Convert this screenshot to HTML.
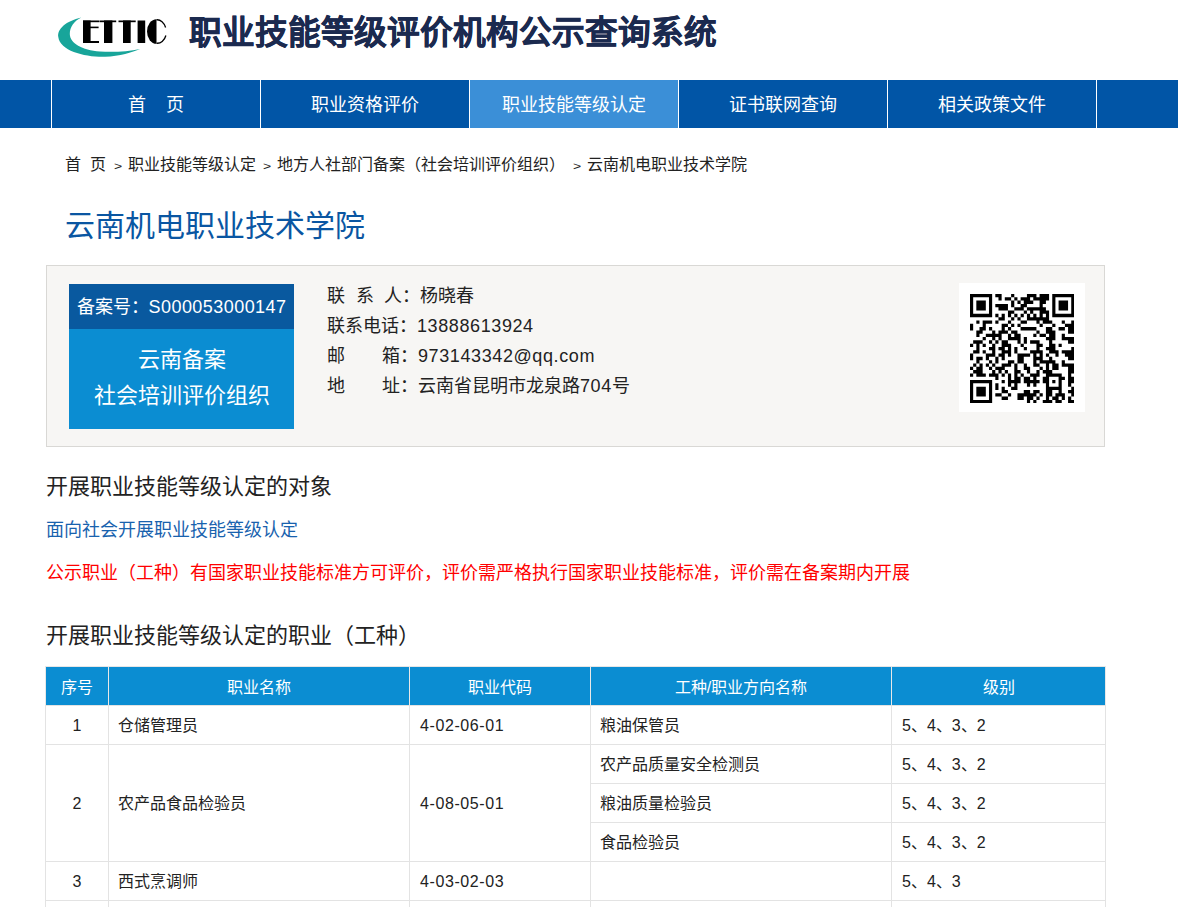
<!DOCTYPE html>
<html lang="zh-CN"><head><meta charset="utf-8">
<style>
*{margin:0;padding:0;box-sizing:border-box}
html,body{width:1178px;height:907px;overflow:hidden;background:#fff}
body{position:relative;font-family:"Liberation Sans",sans-serif;color:#222}
.a{position:absolute;white-space:nowrap}
#nav{position:absolute;left:0;top:80px;width:1178px;height:48px;background:#0155a6}
#nav .d{position:absolute;top:0;width:1px;height:48px;background:#fff}
#nav .c{position:absolute;top:0;height:48px;line-height:51px;font-size:18px;color:#fff;text-align:center}
#nav .on{background:#3b8fd7}
.crumb{font-size:16px;color:#222;top:154px;line-height:22px}
.crumb.gt{font-size:14px;top:155px;transform:scaleY(0.8);transform-origin:0 11px}
#info{position:absolute;left:46px;top:265px;width:1059px;height:182px;background:#f7f6f4;border:1px solid #d9d8d5}
#bluebox{position:absolute;left:69px;top:284px;width:225px;height:145px;background:#0b8dd2}
#bluetop{position:absolute;left:69px;top:284px;width:225px;height:45px;background:#09599f}
.inf{font-size:18px;color:#222;line-height:30px}
table{position:absolute;left:45px;top:666px;border-collapse:collapse;table-layout:fixed;width:1060px}
td,th{border:1px solid #e3e3e3;font-size:16px;height:39px;padding:2px 10px 0;font-weight:normal;color:#222;text-align:left}
th{background:#0b8dd2;color:#fff;text-align:center;height:39px;padding:0 10px 1px;border-color:#e6e6e6 #e8e8e8 #e3e3e3}
.n{letter-spacing:0.6px}
td.z{padding:0 10px 2px 9px}
td.y{padding:0 10px 2px 10px}
td.ctr{text-align:center}
</style></head><body>

<!-- logo -->
<svg class="a" style="left:0;top:0" width="180" height="70" viewBox="0 0 180 70">
  <path d="M81.3 17.5C66 21 57 29 58.3 37C60 51 85 57.3 105 56.8C120 56.3 132 52.5 140.2 49C128 51.5 115 52.3 100 51.6C82 50 70 43.5 69.8 34C69.8 27 74 21 81.3 17.5Z" fill="#18a59a"/>
  <g fill="#000">
    <rect x="83" y="20.5" width="7.6" height="22.5"/><rect x="83" y="20.5" width="16" height="1.7"/><rect x="90" y="26.6" width="8.6" height="1.6"/><rect x="83" y="41" width="16" height="2"/>
    <rect x="99.4" y="20.5" width="16.8" height="1.7"/><rect x="104" y="20.5" width="8.4" height="22.5"/>
    <rect x="118.5" y="20.5" width="17.2" height="1.7"/><rect x="123" y="20.5" width="7.7" height="22.5"/>
    <rect x="137.6" y="20.5" width="7.6" height="22.5"/>
    <path d="M156.5 19.2A9.5 12.3 0 0 0 156.5 43.8Z"/>
  </g>
  <path d="M156.5 19.8A9 11.8 0 0 1 165.6 27.5M156.5 43.2A9 11.8 0 0 0 165.9 35.5" fill="none" stroke="#000" stroke-width="1.3"/>
</svg>
<div class="a" id="title" style="left:188.5px;top:12.5px;font-size:32.65px;font-weight:900;color:#1b2a4f;line-height:40px;-webkit-text-stroke:0.5px #1b2a4f">职业技能等级评价机构公示查询系统</div>

<div id="nav">
  <div class="c" style="left:52px;width:208px">首&nbsp;&nbsp;&nbsp;&nbsp;页</div>
  <div class="c" style="left:261px;width:208px">职业资格评价</div>
  <div class="c on" style="left:470px;width:208px">职业技能等级认定</div>
  <div class="c" style="left:679px;width:208px">证书联网查询</div>
  <div class="c" style="left:888px;width:208px">相关政策文件</div>
  <div class="d" style="left:51px"></div><div class="d" style="left:260px"></div><div class="d" style="left:469px"></div><div class="d" style="left:678px"></div><div class="d" style="left:887px"></div><div class="d" style="left:1096px"></div>
</div>

<div class="a crumb" style="left:65px">首</div>
<div class="a crumb" style="left:90px">页</div>
<div class="a crumb gt" style="left:114px">&gt;</div>
<div class="a crumb" style="left:128px">职业技能等级认定</div>
<div class="a crumb gt" style="left:263px">&gt;</div>
<div class="a crumb" style="left:277px">地方人社部门备案（社会培训评价组织）</div>
<div class="a crumb gt" style="left:573px">&gt;</div>
<div class="a crumb" style="left:587px">云南机电职业技术学院</div>

<div class="a" style="left:64.5px;top:206px;font-size:30px;line-height:40px;color:#0a56a2">云南机电职业技术学院</div>

<div id="info"></div>
<div id="bluebox"></div>
<div id="bluetop"></div>
<div class="a" style="left:69px;top:292px;width:225px;text-align:center;font-size:18px;line-height:30px;color:#fff">备案号：<span style="letter-spacing:0.45px">S000053000147</span></div>
<div class="a" style="left:69px;top:342px;width:225px;text-align:center;font-size:22px;line-height:35.5px;color:#fff">云南备案<br>社会培训评价组织</div>

<div class="a inf" style="left:327px;top:280.5px">联</div>
<div class="a inf" style="left:356px;top:280.5px">系</div>
<div class="a inf" style="left:384px;top:280.5px">人</div>
<div class="a inf" style="left:402px;top:280.5px">：杨晓春</div>
<div class="a inf" style="left:327px;top:310.5px">联系电话：<span class="n">13888613924</span></div>
<div class="a inf" style="left:327px;top:340.5px">邮</div>
<div class="a inf" style="left:382px;top:340.5px">箱：<span class="n">973143342@qq.com</span></div>
<div class="a inf" style="left:327px;top:370.5px">地</div>
<div class="a inf" style="left:382px;top:370.5px">址：云南省昆明市龙泉路<span class="n">704</span>号</div>

<div class="a" style="left:959px;top:283px;width:126px;height:129px;background:#fff"></div>
<svg id="qr" class="a" style="left:969.5px;top:293.6px" width="104.4" height="109.2" viewBox="0 0 33 33" preserveAspectRatio="none"><path fill="#000" d="M0 0h7v1h-7zM8 0h2v1h-2zM13 0h1v1h-1zM18 0h3v1h-3zM22 0h3v1h-3zM26 0h7v1h-7zM0 1h1v1h-1zM6 1h1v1h-1zM9 1h1v1h-1zM11 1h2v1h-2zM14 1h1v1h-1zM16 1h3v1h-3zM20 1h5v1h-5zM26 1h1v1h-1zM32 1h1v1h-1zM0 2h1v1h-1zM2 2h3v1h-3zM6 2h1v1h-1zM13 2h1v1h-1zM15 2h1v1h-1zM17 2h3v1h-3zM22 2h2v1h-2zM26 2h1v1h-1zM28 2h3v1h-3zM32 2h1v1h-1zM0 3h1v1h-1zM2 3h3v1h-3zM6 3h1v1h-1zM8 3h4v1h-4zM13 3h1v1h-1zM16 3h2v1h-2zM22 3h1v1h-1zM26 3h1v1h-1zM28 3h3v1h-3zM32 3h1v1h-1zM0 4h1v1h-1zM2 4h3v1h-3zM6 4h1v1h-1zM9 4h3v1h-3zM14 4h3v1h-3zM18 4h6v1h-6zM26 4h1v1h-1zM28 4h3v1h-3zM32 4h1v1h-1zM0 5h1v1h-1zM6 5h1v1h-1zM12 5h2v1h-2zM17 5h1v1h-1zM19 5h1v1h-1zM22 5h3v1h-3zM26 5h1v1h-1zM32 5h1v1h-1zM0 6h7v1h-7zM8 6h1v1h-1zM10 6h1v1h-1zM12 6h1v1h-1zM14 6h1v1h-1zM16 6h1v1h-1zM18 6h1v1h-1zM20 6h1v1h-1zM22 6h1v1h-1zM24 6h1v1h-1zM26 6h7v1h-7zM9 7h2v1h-2zM13 7h1v1h-1zM15 7h1v1h-1zM18 7h7v1h-7zM2 8h1v1h-1zM4 8h3v1h-3zM8 8h1v1h-1zM12 8h1v1h-1zM16 8h2v1h-2zM21 8h1v1h-1zM23 8h3v1h-3zM29 8h1v1h-1zM32 8h1v1h-1zM0 9h1v1h-1zM4 9h1v1h-1zM10 9h2v1h-2zM13 9h1v1h-1zM15 9h1v1h-1zM22 9h1v1h-1zM26 9h1v1h-1zM30 9h3v1h-3zM0 10h1v1h-1zM3 10h2v1h-2zM6 10h1v1h-1zM10 10h1v1h-1zM12 10h1v1h-1zM16 10h5v1h-5zM24 10h2v1h-2zM28 10h2v1h-2zM31 10h2v1h-2zM2 11h2v1h-2zM7 11h1v1h-1zM9 11h3v1h-3zM13 11h2v1h-2zM21 11h1v1h-1zM24 11h3v1h-3zM31 11h2v1h-2zM2 12h1v1h-1zM5 12h5v1h-5zM12 12h1v1h-1zM14 12h2v1h-2zM20 12h1v1h-1zM22 12h2v1h-2zM25 12h2v1h-2zM29 12h1v1h-1zM4 13h1v1h-1zM7 13h1v1h-1zM9 13h1v1h-1zM12 13h4v1h-4zM17 13h1v1h-1zM24 13h3v1h-3zM29 13h4v1h-4zM1 14h3v1h-3zM6 14h1v1h-1zM8 14h1v1h-1zM10 14h2v1h-2zM15 14h1v1h-1zM17 14h1v1h-1zM19 14h3v1h-3zM25 14h1v1h-1zM31 14h2v1h-2zM0 15h1v1h-1zM2 15h1v1h-1zM4 15h1v1h-1zM7 15h1v1h-1zM10 15h3v1h-3zM16 15h1v1h-1zM21 15h2v1h-2zM25 15h2v1h-2zM28 15h1v1h-1zM2 16h1v1h-1zM6 16h2v1h-2zM9 16h2v1h-2zM12 16h1v1h-1zM14 16h1v1h-1zM17 16h1v1h-1zM21 16h1v1h-1zM24 16h3v1h-3zM32 16h1v1h-1zM1 17h2v1h-2zM4 17h1v1h-1zM7 17h1v1h-1zM10 17h3v1h-3zM14 17h1v1h-1zM19 17h4v1h-4zM25 17h3v1h-3zM29 17h4v1h-4zM0 18h1v1h-1zM5 18h3v1h-3zM9 18h2v1h-2zM12 18h1v1h-1zM15 18h4v1h-4zM20 18h1v1h-1zM22 18h1v1h-1zM24 18h1v1h-1zM27 18h1v1h-1zM30 18h3v1h-3zM0 19h1v1h-1zM2 19h2v1h-2zM5 19h1v1h-1zM8 19h1v1h-1zM10 19h1v1h-1zM15 19h2v1h-2zM20 19h3v1h-3zM25 19h1v1h-1zM31 19h2v1h-2zM2 20h1v1h-1zM6 20h1v1h-1zM8 20h1v1h-1zM12 20h2v1h-2zM15 20h2v1h-2zM20 20h1v1h-1zM22 20h5v1h-5zM29 20h1v1h-1zM1 21h1v1h-1zM3 21h1v1h-1zM5 21h1v1h-1zM7 21h1v1h-1zM10 21h3v1h-3zM14 21h1v1h-1zM17 21h1v1h-1zM20 21h2v1h-2zM24 21h1v1h-1zM26 21h2v1h-2zM29 21h4v1h-4zM0 22h1v1h-1zM2 22h2v1h-2zM6 22h1v1h-1zM8 22h3v1h-3zM14 22h1v1h-1zM17 22h2v1h-2zM22 22h1v1h-1zM24 22h1v1h-1zM26 22h2v1h-2zM31 22h2v1h-2zM1 23h3v1h-3zM7 23h1v1h-1zM9 23h1v1h-1zM11 23h1v1h-1zM14 23h2v1h-2zM18 23h1v1h-1zM21 23h1v1h-1zM23 23h3v1h-3zM31 23h2v1h-2zM0 24h1v1h-1zM2 24h3v1h-3zM6 24h3v1h-3zM10 24h1v1h-1zM12 24h1v1h-1zM14 24h1v1h-1zM16 24h1v1h-1zM19 24h3v1h-3zM24 24h5v1h-5zM31 24h1v1h-1zM8 25h1v1h-1zM12 25h1v1h-1zM14 25h2v1h-2zM17 25h2v1h-2zM20 25h1v1h-1zM23 25h2v1h-2zM28 25h2v1h-2zM31 25h2v1h-2zM0 26h7v1h-7zM10 26h1v1h-1zM12 26h4v1h-4zM17 26h5v1h-5zM23 26h2v1h-2zM26 26h1v1h-1zM28 26h1v1h-1zM31 26h2v1h-2zM0 27h1v1h-1zM6 27h1v1h-1zM8 27h1v1h-1zM12 27h1v1h-1zM14 27h1v1h-1zM18 27h1v1h-1zM20 27h1v1h-1zM24 27h1v1h-1zM28 27h1v1h-1zM31 27h1v1h-1zM0 28h1v1h-1zM2 28h3v1h-3zM6 28h1v1h-1zM8 28h1v1h-1zM10 28h1v1h-1zM13 28h2v1h-2zM24 28h5v1h-5zM32 28h1v1h-1zM0 29h1v1h-1zM2 29h3v1h-3zM6 29h1v1h-1zM10 29h2v1h-2zM17 29h2v1h-2zM20 29h2v1h-2zM24 29h2v1h-2zM28 29h1v1h-1zM31 29h2v1h-2zM0 30h1v1h-1zM2 30h3v1h-3zM6 30h1v1h-1zM8 30h2v1h-2zM12 30h1v1h-1zM15 30h6v1h-6zM22 30h1v1h-1zM24 30h2v1h-2zM27 30h3v1h-3zM32 30h1v1h-1zM0 31h1v1h-1zM6 31h1v1h-1zM10 31h2v1h-2zM15 31h2v1h-2zM18 31h2v1h-2zM21 31h1v1h-1zM24 31h1v1h-1zM26 31h2v1h-2zM29 31h1v1h-1zM31 31h1v1h-1zM0 32h7v1h-7zM18 32h1v1h-1zM20 32h1v1h-1zM23 32h3v1h-3zM27 32h2v1h-2zM31 32h2v1h-2z"/></svg>

<div class="a" style="left:46px;top:472px;font-size:22px;line-height:30px;color:#222">开展职业技能等级认定的对象</div>
<div class="a" style="left:45.5px;top:515.5px;font-size:18px;line-height:28px;color:#1862ae">面向社会开展职业技能等级认定</div>
<div class="a" style="left:45.5px;top:558.5px;font-size:18px;line-height:28px;color:#ff0000">公示职业（工种）有国家职业技能标准方可评价，评价需严格执行国家职业技能标准，评价需在备案期内开展</div>
<div class="a" style="left:46px;top:621px;font-size:22px;line-height:30px;color:#222">开展职业技能等级认定的职业（工种）</div>

<table>
<colgroup><col style="width:63px"><col style="width:301px"><col style="width:181px"><col style="width:301px"><col style="width:214px"></colgroup>
<tr><th>序号</th><th>职业名称</th><th>职业代码</th><th>工种/职业方向名称</th><th>级别</th></tr>
<tr><td class="ctr">1</td><td class="z">仓储管理员</td><td class="n">4-02-06-01</td><td class="z">粮油保管员</td><td class="y">5、4、3、2</td></tr>
<tr><td class="ctr" rowspan="3">2</td><td rowspan="3" class="z">农产品食品检验员</td><td rowspan="3" class="n">4-08-05-01</td><td class="z">农产品质量安全检测员</td><td class="y">5、4、3、2</td></tr>
<tr><td class="z">粮油质量检验员</td><td class="y">5、4、3、2</td></tr>
<tr><td class="z">食品检验员</td><td class="y">5、4、3、2</td></tr>
<tr><td class="ctr">3</td><td class="z">西式烹调师</td><td class="n">4-03-02-03</td><td></td><td class="y">5、4、3</td></tr>
<tr><td class="ctr">4</td><td>&nbsp;</td><td></td><td></td><td></td></tr>
</table>
</body></html>
